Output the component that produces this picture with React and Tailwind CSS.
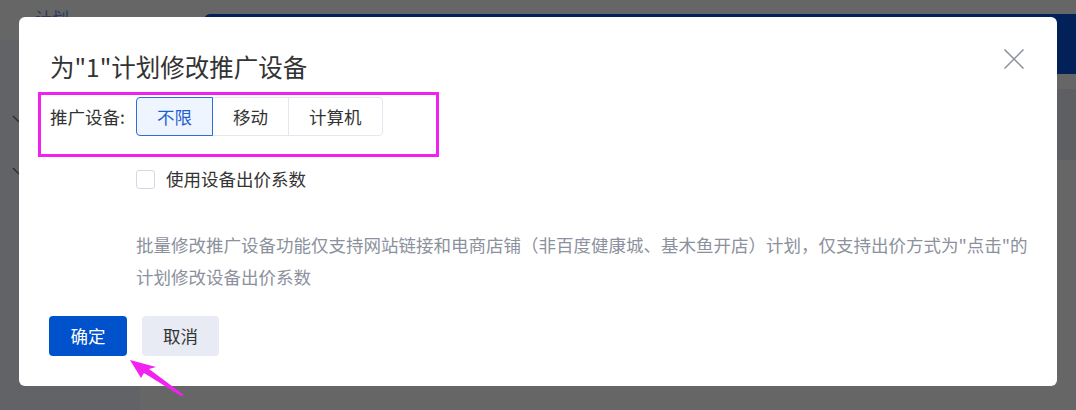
import React from "react";

const font = { fontFamily: '"Noto Sans CJK SC", "Noto Sans", sans-serif' };

function Background() {
  return (
    <div className="flex h-[410px] w-[1076px] bg-[#666666]">
      <div className="flex w-[140px] flex-col">
        <div className="h-[40px] pl-[35px] pt-[6px] text-[17px] leading-[24px] text-[#2f3b58]">计划</div>
        <div className="flex flex-1 flex-col bg-[#626366] pl-[12px] pt-[75px] gap-[44px]">
          <svg width="8" height="8" viewBox="0 0 8 8"><path d="M1 1 L7 7" stroke="#2a2a2a" strokeWidth="1.2" /></svg>
          <svg width="8" height="8" viewBox="0 0 8 8"><path d="M1 1 L7 7" stroke="#2a2a2a" strokeWidth="1.2" /></svg>
        </div>
      </div>
      <div className="flex flex-1 flex-col pt-[14px] pl-[64px]">
        <div className="h-[60px] rounded-tl-[6px] bg-[#022159]" />
        <div className="h-[15px]" />
        <div className="h-[71px] bg-[#5e5f63]" />
      </div>
    </div>
  );
}

function Arrow() {
  return (
    <svg className="pointer-events-none absolute left-0 top-0" width="1076" height="410" viewBox="0 0 1076 410">
      <polygon points="130,360 156,367 149,369 184,395 181,396 144,373 141,378" fill="#f122f1" />
    </svg>
  );
}

export default function App() {
  return (
    <div className="relative h-[410px] w-[1076px] overflow-hidden" style={font}>
      <Background />
      <div className="absolute left-[19px] top-[17px] h-[369px] w-[1038px] rounded-[6px] bg-white px-[31px] pt-[34px]">
        <button className="absolute right-[33px] top-[32px] h-[20px] w-[20px]">
          <svg width="20" height="20" viewBox="0 0 20 20">
            <path d="M0.5 0.5 L19.5 19.5 M19.5 0.5 L0.5 19.5" stroke="#8a909b" strokeWidth="1.5" fill="none" />
          </svg>
        </button>
        <div className="h-[32px] text-[24.5px] leading-[32px] text-[#333333]">为"1"计划修改推广设备</div>
        <div className="-ml-[12px] mt-[9px] h-[65px] w-[401px] border-[3px] border-[#f122f1] pl-[9px] pt-[2px]">
          <div className="flex items-center">
            <span className="w-[86px] text-[17.5px] leading-[39px] text-[#333333]">推广设备:</span>
            <div className="flex">
              <div className="relative z-10 rounded-l-[4px] border border-[#2c6ddb] bg-[#eff5ff] px-[20px] text-[17.5px] leading-[37px] text-[#1f5fd0]">不限</div>
              <div className="-ml-px border border-[#e3e7f0] bg-white px-[20px] text-[17.5px] leading-[37px] text-[#333333]">移动</div>
              <div className="-ml-px rounded-r-[4px] border border-[#e3e7f0] bg-white px-[20px] text-[17.5px] leading-[37px] text-[#333333]">计算机</div>
            </div>
          </div>
        </div>
        <div className="ml-[86px] mt-[10px] flex h-[24px] items-center">
          <span className="h-[19px] w-[19px] rounded-[3px] border border-[#d3d8e2] bg-white" />
          <span className="ml-[11px] text-[17.5px] leading-[24px] text-[#333333]">使用设备出价系数</span>
        </div>
        <div className="ml-[86px] mt-[38px] whitespace-nowrap text-[17.5px] leading-[32px] text-[#8b919d]">
          批量修改推广设备功能仅支持网站链接和电商店铺（非百度健康城、基木鱼开店）计划，仅支持出价方式为"点击"的
          <br />
          计划修改设备出价系数
        </div>
        <div className="-ml-px mt-[23px] flex gap-[15px]">
          <button className="h-[40px] w-[78px] rounded-[4px] bg-[#0052cc] text-[17.5px] text-white">确定</button>
          <button className="h-[40px] w-[77px] rounded-[4px] bg-[#e8ebf3] text-[17.5px] text-[#333333]">取消</button>
        </div>
      </div>
      <Arrow />
    </div>
  );
}
